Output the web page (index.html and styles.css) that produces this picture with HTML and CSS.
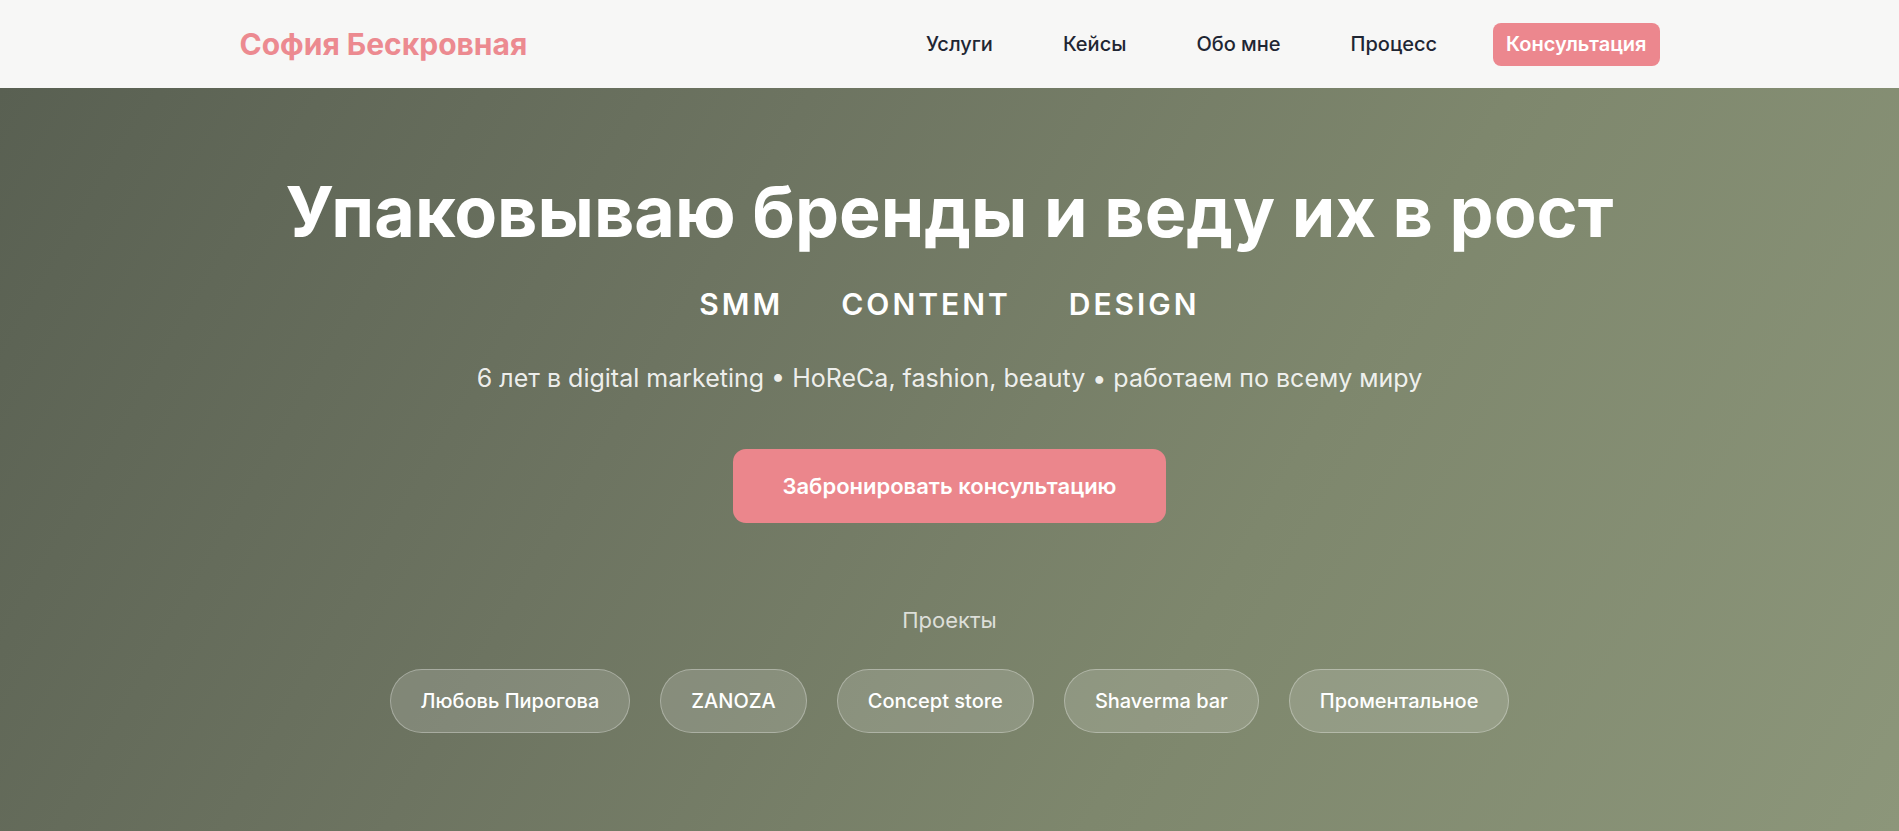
FILE: index.html
```html
<!DOCTYPE html>
<html lang="ru">
<head>
<meta charset="utf-8">
<title>София Бескровная</title>
<link rel="stylesheet" href="styles.css">
</head>
<body>
<header class="site-header">
  <div class="header-inner">
    <a class="logo" href="#">София Бескровная</a>
    <nav class="nav">
      <a class="nav-link" href="#">Услуги</a>
      <a class="nav-link" href="#">Кейсы</a>
      <a class="nav-link" href="#">Обо мне</a>
      <a class="nav-link" href="#">Процесс</a>
      <a class="nav-cta" href="#">Консультация</a>
    </nav>
  </div>
</header>
<section class="hero">
  <h1 class="hero-title">Упаковываю бренды и веду их в рост</h1>
  <div class="hero-tags">
    <span class="tag">SMM</span>
    <span class="tag">CONTENT</span>
    <span class="tag">DESIGN</span>
  </div>
  <p class="hero-sub">6 лет в digital marketing • HoReCa, fashion, beauty • работаем по всему миру</p>
  <a class="hero-btn" href="#">Забронировать консультацию</a>
  <p class="projects-label">Проекты</p>
  <div class="projects">
    <span class="chip">Любовь Пирогова</span>
    <span class="chip">ZANOZA</span>
    <span class="chip">Concept store</span>
    <span class="chip">Shaverma bar</span>
    <span class="chip">Проментальное</span>
  </div>
</section>
</body>
</html>
```
FILE: styles.css
```css
* { box-sizing: border-box; }
html, body { margin: 0; padding: 0; }
body {
  font-family: Inter, "Noto Sans", "Liberation Sans", sans-serif;
  background: #7a836c;
  overflow: hidden;
}
a { text-decoration: none; }

.site-header {
  background: #f7f7f6;
  height: 88px;
  display: flex;
  align-items: center;
}
.header-inner {
  width: 1420px;
  margin: 0 auto;
  display: flex;
  align-items: center;
  justify-content: space-between;
}
.logo {
  color: #ec8a90;
  font-size: 30px;
  font-weight: 700;
  line-height: 1.2;
}
.nav {
  display: flex;
  align-items: center;
  gap: 38px;
}
.nav-link {
  color: #1f2633;
  font-size: 20px;
  font-weight: 500;
  padding: 8px 16px;
  line-height: 27px;
}
.nav-cta {
  margin-left: 2px;
  background: #ec878e;
  color: #fff;
  font-size: 20px;
  font-weight: 600;
  line-height: 27px;
  padding: 8px 13px;
  border-radius: 8px;
}

.hero {
  min-height: 743px;
  background: linear-gradient(120deg, #596052 0%, #6d7461 35%, #7e876d 65%, #8c967a 100%);
  display: flex;
  flex-direction: column;
  align-items: center;
  padding-top: 82px;
  color: #fff;
  text-align: center;
}
.hero-title {
  margin: 0;
  font-size: 70px;
  font-weight: 700;
  line-height: 84px;
}
.hero-tags {
  display: flex;
  gap: 58px;
  margin-top: 31px;
}
.tag {
  font-size: 30px;
  font-weight: 600;
  letter-spacing: 0.1em;
  line-height: 39px;
}
.hero-sub {
  margin: 37px 0 0;
  font-size: 25px;
  font-weight: 400;
  line-height: 35px;
  color: rgba(255, 255, 255, 0.9);
}
.hero-btn {
  margin-top: 53px;
  background: #eb868c;
  color: #fff;
  font-size: 22px;
  font-weight: 600;
  line-height: 26px;
  padding: 24px 49px;
  border-radius: 13px;
}
.projects-label {
  margin: 82px 0 0;
  font-size: 22px;
  line-height: 31px;
  color: rgba(255, 255, 255, 0.75);
}
.projects {
  display: flex;
  gap: 30px;
  margin-top: 33px;
}
.chip {
  font-size: 20px;
  font-weight: 500;
  line-height: 28px;
  padding: 17px 30px;
  border-radius: 999px;
  background: rgba(255, 255, 255, 0.15);
  border: 1px solid rgba(255, 255, 255, 0.3);
  color: #fff;
}
```
